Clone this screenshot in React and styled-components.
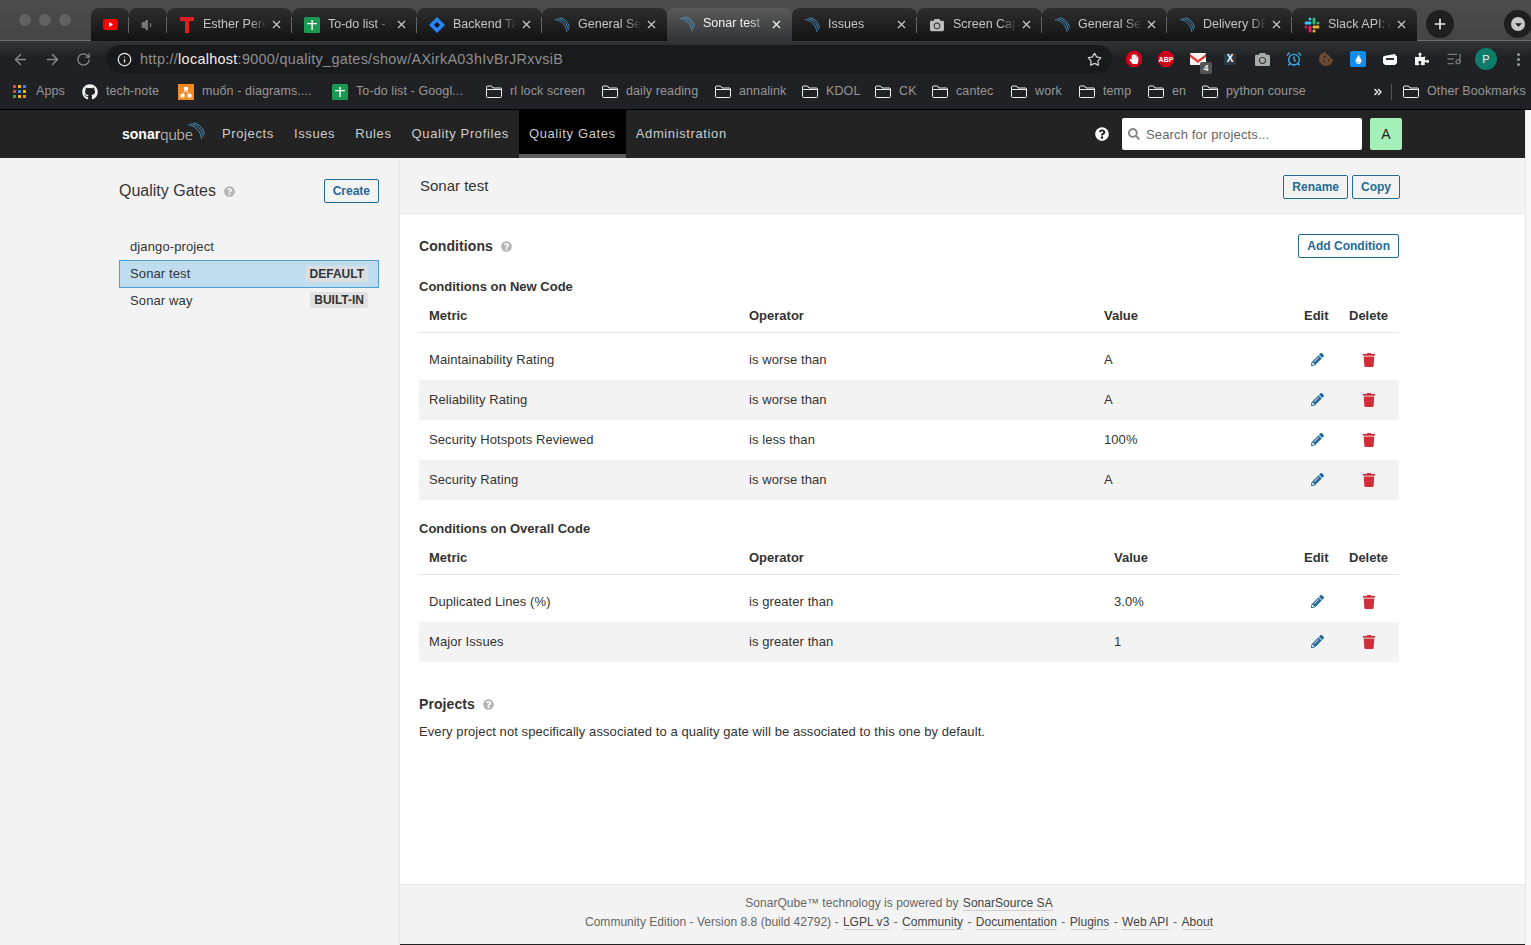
import React from 'react';
import styled, { createGlobalStyle } from 'styled-components';
import { ArrowLeft, ArrowRight, RotateCw, Info, Star, Plus, X, ChevronsRight, AlarmClock, ListMusic, Volume1 } from 'lucide-react';
import { FaGithub, FaCamera, FaCookieBite, FaTint, FaPuzzlePiece, FaPencilAlt, FaTrash, FaQuestionCircle, FaSearch, FaHandPaper, FaCaretDown } from 'react-icons/fa';

const GlobalStyle = createGlobalStyle`
  html, body {
    margin: 0;
    height: 100%;
    overflow: hidden;
  }
  * {
    box-sizing: border-box;
  }
  body {
    font-family: "Liberation Sans", Arial, sans-serif;
    font-size: 13px;
    color: #333;
  }
`;

const Shell = styled.div`
  width: 1531px;
  height: 945px;
  display: flex;
  flex-direction: column;
  overflow: hidden;
  background: #fff;
`;

/* browser chrome */
const TabStrip = styled.div`
  height: 41px;
  flex: none;
  display: flex;
  align-items: flex-end;
  padding-left: 91px;
  background: linear-gradient(#4c4c4c, #454545);
  border-bottom: 1px solid #6e6e6e;
  position: relative;
`;

const Lights = styled.div`
  position: absolute;
  left: 19px;
  top: 14px;
  display: flex;
  gap: 8px;
`;

const Light = styled.span`
  width: 12px;
  height: 12px;
  border-radius: 50%;
  background: #626262;
`;

const Tab = styled.div`
  width: ${(p) => p.$w || 125}px;
  height: 33px;
  margin-bottom: -1px;
  display: flex;
  align-items: center;
  padding-left: ${(p) => (p.$pinned ? 11 : 12)}px;
  gap: 8px;
  border-radius: 8px 8px 0 0;
  background: ${(p) => (p.$active ? 'linear-gradient(#5a5a5a, #333436)' : 'linear-gradient(#2e2e2e, #121212)')};
  color: ${(p) => (p.$active ? '#f0f0f0' : '#c4c4c4')};
  font-size: 12.5px;
  position: relative;
  ${(p) => (p.$active ? 'border-bottom: 1px solid #333436; z-index: 1;' : '')}
  &::after {
    content: '';
    position: absolute;
    right: 0;
    top: 9px;
    height: 16px;
    width: 1px;
    background: ${(p) => (p.$divider ? '#666' : 'transparent')};
  }
`;

const FaviconBox = styled.span`
  width: 16px;
  height: 16px;
  flex: none;
  display: flex;
  align-items: center;
  justify-content: center;
`;

const TabTitle = styled.span`
  width: 66px;
  flex: none;
  margin-bottom: 2px;
  white-space: nowrap;
  overflow: hidden;
  -webkit-mask-image: linear-gradient(to right, #000 72%, transparent 96%);
  mask-image: linear-gradient(to right, #000 72%, transparent 96%);
`;

const TabClose = styled(X)`
  position: absolute;
  right: 9px;
  top: 10px;
  width: 13px;
  height: 13px;
  color: ${(p) => (p.$active ? '#fff' : '#d0d0d0')};
`;

const RoundButton = styled.div`
  position: absolute;
  top: 10px;
  left: ${(p) => p.$left}px;
  width: 28px;
  height: 28px;
  border-radius: 50%;
  background: #1f1f1f;
  display: flex;
  align-items: center;
  justify-content: center;
  color: #e8e8e8;
`;

const CaretDisc = styled.span`
  width: 14px;
  height: 14px;
  border-radius: 50%;
  background: #c9c9c9;
  color: #222;
  display: flex;
  align-items: center;
  justify-content: center;
`;

const ToolbarWrap = styled.div`
  height: 33px;
  flex: none;
  padding-top: 4px;
  background: linear-gradient(#333436, #202124 50%);
`;

const Toolbar = styled.div`
  height: 28px;
  display: flex;
  align-items: center;
  position: relative;
`;

const NavIcons = styled.div`
  width: 106px;
  flex: none;
  display: flex;
  align-items: center;
  padding-left: 12px;
  gap: 15px;
  color: #8a8a8a;
`;

const UrlPill = styled.div`
  width: 1006px;
  height: 28px;
  flex: none;
  border-radius: 14px;
  background: #191a1c;
  display: flex;
  align-items: center;
  padding: 0 10px 0 11px;
  color: #8f8f8f;
  font-size: 14.4px;
`;

const UrlText = styled.span`
  margin-left: 8px;
  flex: 1;
  letter-spacing: 0.3px;
  b {
    font-weight: 400;
    color: #eee;
  }
`;

const ExtensionRow = styled.div`
  display: flex;
  flex: none;
  margin-left: 6px;
`;

const Ext = styled.span`
  width: 32px;
  height: 28px;
  display: flex;
  align-items: center;
  justify-content: center;
  position: relative;
`;

const Octagon = styled.span`
  width: 16px;
  height: 16px;
  background: #d0021b;
  clip-path: polygon(30% 0, 70% 0, 100% 30%, 100% 70%, 70% 100%, 30% 100%, 0 70%, 0 30%);
  display: flex;
  align-items: center;
  justify-content: center;
  color: #fff;
  font-size: 7px;
  font-weight: 700;
`;

const CountBadge = styled.span`
  position: absolute;
  left: 18px;
  top: 17px;
  width: 12px;
  height: 12px;
  background: #555;
  border-radius: 2px;
  color: #eee;
  font-size: 9px;
  font-weight: 700;
  text-align: center;
  line-height: 12px;
`;

const XBox = styled.span`
  width: 12px;
  height: 12px;
  border-radius: 2px;
  background: #2a3a47;
  color: #fff;
  font-size: 10px;
  font-weight: 700;
  line-height: 12px;
  text-align: center;
`;

const WaterBox = styled.span`
  width: 16px;
  height: 16px;
  border-radius: 2px;
  background: #0f8df0;
  display: flex;
  align-items: center;
  justify-content: center;
  color: #fff;
`;

const Avatar = styled.span`
  width: 22px;
  height: 22px;
  border-radius: 50%;
  background: #0e7c6b;
  color: #eee;
  font-size: 11px;
  line-height: 22px;
  text-align: center;
`;

const Dots = styled.span`
  display: flex;
  flex-direction: column;
  gap: 2px;
  i {
    width: 3px;
    height: 3px;
    border-radius: 50%;
    background: #9a9a9a;
  }
`;

const BookmarksBar = styled.div`
  height: 36px;
  flex: none;
  background: #202124;
  border-bottom: 1px solid #000;
  display: flex;
  align-items: center;
  padding-left: 13px;
  color: #979797;
  font-size: 12.5px;
  letter-spacing: 0.1px;
  white-space: nowrap;
`;

const Bookmark = styled.div`
  width: ${(p) => p.$w}px;
  flex: none;
  display: flex;
  align-items: center;
  gap: ${(p) => p.$gap || 8}px;
`;

const BookmarkLabel = styled.span`
  margin-bottom: 2px;
`;

const BookmarkDivider = styled.span`
  width: 1px;
  height: 16px;
  flex: none;
  background: #555;
  margin-right: 11px;
`;

/* sonarqube page */
const PageWrap = styled.div`
  flex: 1;
  display: flex;
  min-height: 0;
`;

const Page = styled.div`
  width: 1525px;
  flex: none;
  display: flex;
  flex-direction: column;
  background: #f3f3f3;
`;

const ScrollGutter = styled.div`
  flex: 1;
  background: #f8f8f8;
  border-left: 1px solid #e8e8e8;
`;

const TopNav = styled.nav`
  height: 48px;
  flex: none;
  background: #232323;
  display: flex;
  align-items: stretch;
  padding-left: 122px;
  color: #ccc;
  letter-spacing: 0.62px;
`;

const Logo = styled.div`
  width: 90px;
  display: flex;
  align-items: center;
  position: relative;
  color: #fff;
  font-size: 14px;
  letter-spacing: 0;
  b {
    font-weight: 700;
  }
  span {
    font-family: Lato, "Liberation Sans", sans-serif;
    font-weight: 300;
    font-size: 15px;
    color: #eee;
  }
  svg {
    position: absolute;
    left: 65px;
    top: 12px;
  }
`;

const NavItem = styled.a`
  padding: 0 10px 2px;
  display: flex;
  align-items: center;
  color: #ccc;
  ${(p) => p.$active && `
    padding-top: 2px;
    padding-bottom: 0;
    background: #000;
    border-bottom: 4px solid #5c5c5c;
  `}
`;

const NavRight = styled.div`
  margin-left: auto;
  margin-right: 123px;
  display: flex;
  align-items: center;
`;

const SearchBox = styled.div`
  width: 240px;
  height: 32px;
  margin-left: 13px;
  background: #fff;
  border-radius: 2px;
  display: flex;
  align-items: center;
  padding-left: 6px;
  gap: 6px;
  color: #666;
  letter-spacing: 0.15px;
`;

const UserTile = styled.div`
  width: 32px;
  height: 32px;
  margin-left: 8px;
  border-radius: 2px;
  background: #a4f0b8;
  color: #222;
  font-size: 14px;
  letter-spacing: 0;
  display: flex;
  align-items: center;
  justify-content: center;
`;

const Body = styled.div`
  flex: 1;
  min-height: 0;
  display: flex;
`;

const Sidebar = styled.aside`
  width: 400px;
  flex: none;
  padding: 21px 20px 0 119px;
  border-right: 1px solid #e6e6e6;
`;

const SidebarHead = styled.div`
  height: 24px;
  display: flex;
  align-items: center;
  margin-bottom: 30px;
`;

const SidebarTitle = styled.h1`
  margin: 0;
  font-size: 16px;
  font-weight: 400;
  color: #333;
`;

const HelpDot = styled(FaQuestionCircle)`
  width: 11px;
  height: 11px;
  color: #b4b4b4;
  margin-left: 8px;
`;

const Button = styled.button`
  height: 24px;
  padding: 0 8px;
  margin-left: ${(p) => (p.$push ? 'auto' : '0')};
  border: 1px solid #236a97;
  border-radius: 2px;
  background: transparent;
  color: #236a97;
  font: 700 12px "Liberation Sans", Arial, sans-serif;
`;

const GateRow = styled.div`
  height: ${(p) => (p.$selected ? 28 : 27)}px;
  display: flex;
  align-items: center;
  justify-content: space-between;
  padding: 0 ${(p) => (p.$selected ? 10 : 11)}px 1px ${(p) => (p.$selected ? 10 : 11)}px;
  border: ${(p) => (p.$selected ? '1px solid #4b9fd5' : '0')};
  background: ${(p) => (p.$selected ? '#c0ddf0' : 'transparent')};
  color: #333;
  letter-spacing: 0.12px;
  &:last-child {
    padding-bottom: 3px;
  }
`;

const Badge = styled.span`
  height: 16px;
  padding: 0 4px;
  border-radius: 2px;
  background: ${(p) => (p.$onBlue ? '#dcdfe2' : '#e1e1e1')};
  color: #333;
  font-size: 12px;
  font-weight: 700;
  line-height: 16px;
  letter-spacing: 0;
`;

const Main = styled.main`
  flex: 1;
  min-width: 0;
  display: flex;
  flex-direction: column;
  background: #fff;
`;

const MainHead = styled.header`
  height: 56px;
  flex: none;
  display: flex;
  align-items: center;
  gap: 4px;
  padding: 2px 125px 0 20px;
  background: #f3f3f3;
  border-bottom: 1px solid #e6e6e6;
`;

const MainTitle = styled.h2`
  margin: 0 auto 0 0;
  font-size: 15px;
  font-weight: 400;
  color: #333;
  position: relative;
  top: -1px;
`;

const Content = styled.div`
  flex: 1;
  padding: 20px 126px 0 19px;
  letter-spacing: 0.08px;
`;

const SectionHead = styled.div`
  height: 24px;
  display: flex;
  align-items: center;
`;

const SectionTitle = styled.h3`
  margin: 0;
  font-size: 14px;
  font-weight: 700;
  color: #333;
`;

const SubTitle = styled.h4`
  margin: 0;
  margin-top: 19px;
  height: 20px;
  line-height: 20px;
  font-size: 13px;
  font-weight: 700;
  color: #333;
  letter-spacing: 0;
`;

const TableRow = styled.div`
  display: grid;
  grid-template-columns: 320px ${(p) => p.$op}px 1fr 45px 40px;
  align-items: center;
  padding: 0 10px;
`;

const HeadRow = styled(TableRow)`
  height: 36px;
  padding-top: 2px;
  border-bottom: 1px solid #e6e6e6;
  margin-bottom: 7px;
  font-weight: 700;
  letter-spacing: 0;
`;

const BodyRow = styled(TableRow)`
  height: 40px;
  padding-bottom: 1px;
  background: ${(p) => (p.$odd ? '#f3f3f3' : '#fff')};
`;

const EditCell = styled.span`
  width: 26px;
  display: flex;
  justify-content: center;
  color: #236a97;
`;

const DeleteCell = styled.span`
  display: flex;
  justify-content: center;
  color: #d02f3a;
`;

const ProjectsHead = styled(SectionHead)`
  margin-top: 30px;
  margin-bottom: 4px;
`;

const Paragraph = styled.p`
  margin: 0;
  line-height: 24px;
`;

const Footer = styled.footer`
  height: 61px;
  flex: none;
  border-top: 1px solid #e6e6e6;
  background: #f3f3f3;
  border-bottom: 1px solid #222;
  color: #666;
  font-size: 12px;
  letter-spacing: 0.03px;
  text-align: center;
  line-height: 19px;
  padding: 9px 126px 0 0;
`;

const FootLink = styled.a`
  color: #444;
  margin: 0 1px;
  border-bottom: 1px solid #cfcfcf;
`;

function SonarArcs({ size = 16 }) {
  return (
    <svg width={size} height={size} viewBox="0 0 16 16" fill="none" stroke="#4b9fd5" strokeWidth="0.8">
      <path d="M1 2.5C7 3 12 8 13 15" />
      <path d="M3.5 1.5C9 2 13.5 7 14.5 13" />
      <path d="M6 0.8C10.5 1.5 14.5 5.5 15.5 10.5" />
    </svg>
  );
}

function YouTubeIcon() {
  return (
    <svg width="15" height="11" viewBox="0 0 15 11">
      <rect width="15" height="11" rx="3" fill="#f00" />
      <path d="M6 3l4 2.5L6 8z" fill="#fff" />
    </svg>
  );
}

function SheetIcon() {
  return (
    <svg width="16" height="16" viewBox="0 0 16 16">
      <rect width="16" height="16" rx="1.5" fill="#189a55" />
      <path d="M3 6h10v1.2H8.8V13H7.4V7.2H3z" fill="#fff" />
      <path d="M7.4 3h1.4v3H7.4z" fill="#fff" />
    </svg>
  );
}

function JiraIcon() {
  return (
    <svg width="16" height="16" viewBox="0 0 16 16">
      <path d="M8 0l8 8-8 8-8-8z" fill="#2684ff" />
      <path d="M8 5l3 3-3 3-3-3z" fill="#121212" />
    </svg>
  );
}

function SlackIcon() {
  return (
    <svg width="16" height="16" viewBox="0 0 16 16" strokeWidth="3" strokeLinecap="round" fill="none">
      <path d="M6 2v0M2 6h4" stroke="#36c5f0" />
      <path d="M14 6v0M10 2v4" stroke="#2eb67d" />
      <path d="M10 14v0M14 10h-4" stroke="#ecb22e" />
      <path d="M2 10v0M6 14v-4" stroke="#e01e5a" />
    </svg>
  );
}

function TLogo() {
  return (
    <svg width="14" height="16" viewBox="0 0 14 16">
      <path d="M0 0h14v4H9v12H5V4H0z" fill="#e02020" />
    </svg>
  );
}

function AppsIcon() {
  const colors = ['#e8453c', '#f4b400', '#4285f4', '#e8453c', '#4285f4', '#f4b400', '#34a853', '#f4b400', '#ea8a2d'];
  return (
    <svg width="13" height="13" viewBox="0 0 13 13">
      {colors.map((c, i) => (
        <rect key={i} x={(i % 3) * 5} y={Math.floor(i / 3) * 5} width="3" height="3" fill={c} />
      ))}
    </svg>
  );
}

function DiagramIcon() {
  return (
    <svg width="16" height="16" viewBox="0 0 16 16">
      <rect width="16" height="16" fill="#ef8a24" />
      <rect x="6" y="3" width="4" height="3.5" fill="#fff" />
      <rect x="2.5" y="10" width="4" height="3.5" fill="#fff" />
      <rect x="9.5" y="10" width="4" height="3.5" fill="#fff" />
      <path d="M8 6.5L4.5 10M8 6.5l3.5 3.5" stroke="#fff" strokeWidth="1" />
    </svg>
  );
}

function FolderIcon() {
  return (
    <svg width="16" height="13" viewBox="0 0 16 13" fill="none" stroke="#efefef" strokeWidth="1">
      <path d="M.5 11.5V2A1 1 0 0 1 1.5 1h4l1.5 2h7.5a1 1 0 0 1 1 1v7.5a1 1 0 0 1-1 1h-13a1 1 0 0 1-1-1z" />
      <path d="M.5 4.5h15" />
    </svg>
  );
}

function GmailIcon() {
  return (
    <svg width="16" height="12" viewBox="0 0 16 12">
      <rect width="16" height="12" rx="1" fill="#f4f4f4" />
      <path d="M0 1l8 6 8-6v3L8 10 0 4z" fill="#e0403a" />
    </svg>
  );
}

function BoxIcon() {
  return (
    <svg width="14" height="11" viewBox="0 0 14 11">
      <path d="M1 2l11-2 1 2h1v7l-2 2H2L0 9V3z" fill="#fff" />
      <path d="M3 4h8v2H3z" fill="#333" />
    </svg>
  );
}

const tabs = [
  { icon: <YouTubeIcon />, w: 38, pinned: true, divider: true },
  { icon: <Volume1 size={14} color="#777" fill="#777" />, w: 38, pinned: true, divider: true },
  { icon: <TLogo />, title: 'Esther Perel', divider: true },
  { icon: <SheetIcon />, title: 'To-do list - Google', divider: true },
  { icon: <JiraIcon />, title: 'Backend Tasks', divider: true },
  { icon: <SonarArcs />, title: 'General Settings' },
  { icon: <SonarArcs />, title: 'Sonar test', active: true },
  { icon: <SonarArcs />, title: 'Issues', divider: true },
  { icon: <FaCamera size={14} color="#bbb" />, title: 'Screen Capture', divider: true },
  { icon: <SonarArcs />, title: 'General Settings', divider: true },
  { icon: <SonarArcs />, title: 'Delivery DE', divider: true },
  { icon: <SlackIcon />, title: 'Slack API: A' },
];

const bookmarks = [
  { icon: <AppsIcon />, label: 'Apps', w: 69, gap: 10 },
  { icon: <FaGithub size={16} color="#f2f2f2" />, label: 'tech-note', w: 96 },
  { icon: <DiagramIcon />, label: 'muốn - diagrams....', w: 154 },
  { icon: <SheetIcon />, label: 'To-do list - Googl...', w: 154 },
  { icon: <FolderIcon />, label: 'rl lock screen', w: 116 },
  { icon: <FolderIcon />, label: 'daily reading', w: 113 },
  { icon: <FolderIcon />, label: 'annalink', w: 87 },
  { icon: <FolderIcon />, label: 'KDOL', w: 73 },
  { icon: <FolderIcon />, label: 'CK', w: 57 },
  { icon: <FolderIcon />, label: 'cantec', w: 79 },
  { icon: <FolderIcon />, label: 'work', w: 68 },
  { icon: <FolderIcon />, label: 'temp', w: 69 },
  { icon: <FolderIcon />, label: 'en', w: 54 },
  { icon: <FolderIcon />, label: 'python course', w: 170 },
];

const newCode = [
  ['Maintainability Rating', 'is worse than', 'A'],
  ['Reliability Rating', 'is worse than', 'A'],
  ['Security Hotspots Reviewed', 'is less than', '100%'],
  ['Security Rating', 'is worse than', 'A'],
];

const overallCode = [
  ['Duplicated Lines (%)', 'is greater than', '3.0%'],
  ['Major Issues', 'is greater than', '1'],
];

function ConditionsTable({ rows, op }) {
  return (
    <>
      <HeadRow $op={op}>
        <span>Metric</span>
        <span>Operator</span>
        <span>Value</span>
        <span>Edit</span>
        <span>Delete</span>
      </HeadRow>
      {rows.map(([metric, operator, value], i) => (
        <BodyRow key={metric} $op={op} $odd={i % 2 === 1}>
          <span>{metric}</span>
          <span>{operator}</span>
          <span>{value}</span>
          <EditCell><FaPencilAlt size={13} /></EditCell>
          <DeleteCell><FaTrash size={14} /></DeleteCell>
        </BodyRow>
      ))}
    </>
  );
}

export default function App() {
  return (
    <Shell>
      <GlobalStyle />
      <TabStrip>
        <Lights>
          <Light />
          <Light />
          <Light />
        </Lights>
        {tabs.map((t, i) => (
          <Tab key={i} $w={t.w} $pinned={t.pinned} $active={t.active} $divider={t.divider}>
            <FaviconBox>{t.icon}</FaviconBox>
            {t.title && <TabTitle>{t.title}</TabTitle>}
            {t.title && <TabClose $active={t.active} />}
          </Tab>
        ))}
        <RoundButton $left={1426}><Plus size={16} strokeWidth={2.5} /></RoundButton>
        <RoundButton $left={1504}><CaretDisc><FaCaretDown size={11} /></CaretDisc></RoundButton>
      </TabStrip>
      <ToolbarWrap>
        <Toolbar>
          <NavIcons>
            <ArrowLeft size={17} />
            <ArrowRight size={17} />
            <RotateCw size={15} />
          </NavIcons>
          <UrlPill>
            <Info size={15} color="#e8e8e8" />
            <UrlText>http://<b>localhost</b>:9000/quality_gates/show/AXirkA03hIvBrJRxvsiB</UrlText>
            <Star size={15} color="#cfcfcf" />
          </UrlPill>
          <ExtensionRow>
            <Ext><Octagon><FaHandPaper size={10} /></Octagon></Ext>
            <Ext><Octagon>ABP</Octagon></Ext>
            <Ext><GmailIcon /><CountBadge>4</CountBadge></Ext>
            <Ext><XBox>X</XBox></Ext>
            <Ext><FaCamera size={15} color="#aaa" /></Ext>
            <Ext><AlarmClock size={16} color="#3bb0ee" /></Ext>
            <Ext><FaCookieBite size={14} color="#6b4a32" /></Ext>
            <Ext><WaterBox><FaTint size={9} /></WaterBox></Ext>
            <Ext><BoxIcon /></Ext>
            <Ext><FaPuzzlePiece size={14} color="#f5f5f5" /></Ext>
            <Ext><ListMusic size={16} color="#777" /></Ext>
            <Ext><Avatar>P</Avatar></Ext>
            <Ext><Dots><i /><i /><i /></Dots></Ext>
          </ExtensionRow>
        </Toolbar>
      </ToolbarWrap>
      <BookmarksBar>
        {bookmarks.map((b) => (
          <Bookmark key={b.label} $w={b.w} $gap={b.gap}>
            {b.icon}
            <BookmarkLabel>{b.label}</BookmarkLabel>
          </Bookmark>
        ))}
        <Bookmark $w={19}><ChevronsRight size={12} strokeWidth={3} color="#eee" /></Bookmark>
        <BookmarkDivider />
        <Bookmark $w={126}>
          <FolderIcon />
          <BookmarkLabel>Other Bookmarks</BookmarkLabel>
        </Bookmark>
      </BookmarksBar>

      <PageWrap>
        <Page>
          <TopNav>
            <Logo>
              <b>sonar</b><span>qube</span>
              <SonarArcs size={18} />
            </Logo>
            <NavItem>Projects</NavItem>
            <NavItem>Issues</NavItem>
            <NavItem>Rules</NavItem>
            <NavItem>Quality Profiles</NavItem>
            <NavItem $active>Quality Gates</NavItem>
            <NavItem>Administration</NavItem>
            <NavRight>
              <FaQuestionCircle size={14} color="#fff" />
              <SearchBox>
                <FaSearch size={12} color="#888" />
                Search for projects...
              </SearchBox>
              <UserTile>A</UserTile>
            </NavRight>
          </TopNav>
          <Body>
            <Sidebar>
              <SidebarHead>
                <SidebarTitle>Quality Gates</SidebarTitle>
                <HelpDot />
                <Button $push>Create</Button>
              </SidebarHead>
              <GateRow>django-project</GateRow>
              <GateRow $selected>Sonar test<Badge $onBlue>DEFAULT</Badge></GateRow>
              <GateRow>Sonar way<Badge>BUILT-IN</Badge></GateRow>
            </Sidebar>
            <Main>
              <MainHead>
                <MainTitle>Sonar test</MainTitle>
                <Button>Rename</Button>
                <Button>Copy</Button>
              </MainHead>
              <Content>
                <SectionHead>
                  <SectionTitle>Conditions</SectionTitle>
                  <HelpDot />
                  <Button $push>Add Condition</Button>
                </SectionHead>
                <SubTitle>Conditions on New Code</SubTitle>
                <ConditionsTable rows={newCode} op={355} />
                <SubTitle>Conditions on Overall Code</SubTitle>
                <ConditionsTable rows={overallCode} op={365} />
                <ProjectsHead>
                  <SectionTitle>Projects</SectionTitle>
                  <HelpDot />
                </ProjectsHead>
                <Paragraph>Every project not specifically associated to a quality gate will be associated to this one by default.</Paragraph>
              </Content>
              <Footer>
                <div>SonarQube™ technology is powered by <FootLink>SonarSource SA</FootLink></div>
                <div>
                  Community Edition - Version 8.8 (build 42792) - <FootLink>LGPL v3</FootLink> - <FootLink>Community</FootLink> - <FootLink>Documentation</FootLink> - <FootLink>Plugins</FootLink> - <FootLink>Web API</FootLink> - <FootLink>About</FootLink>
                </div>
              </Footer>
            </Main>
          </Body>
        </Page>
        <ScrollGutter />
      </PageWrap>
    </Shell>
  );
}
